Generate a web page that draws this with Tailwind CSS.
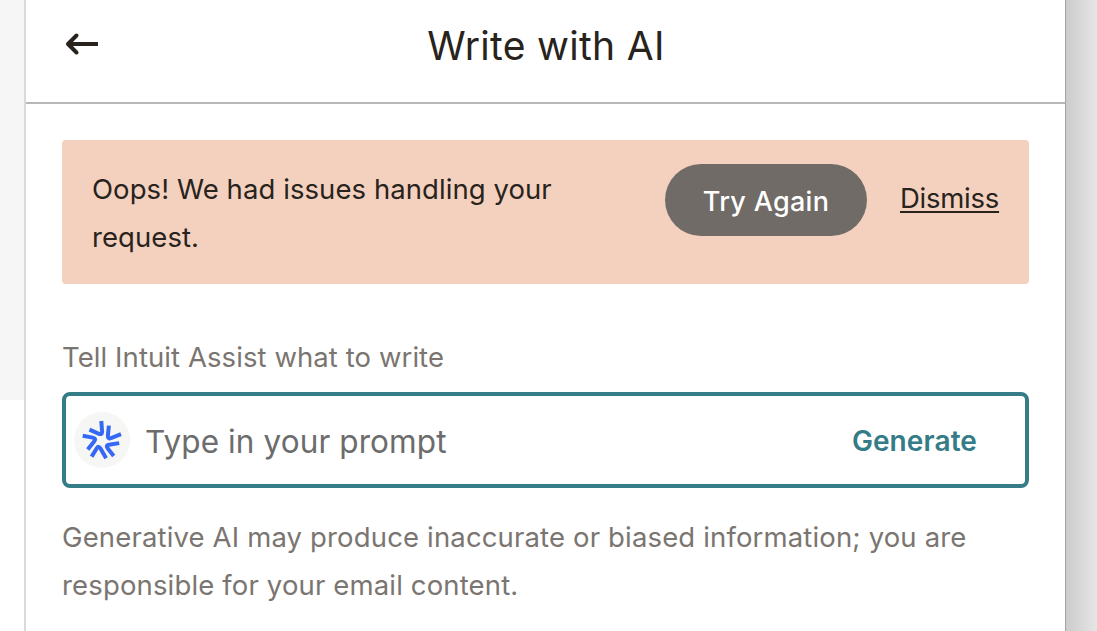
<!DOCTYPE html>
<html lang="en"><head><meta charset="utf-8"><title>Write with AI</title>
<script src="https://cdn.jsdelivr.net/npm/@tailwindcss/browser@4"></script></head>
<body class="h-[631px] w-[1097px] overflow-hidden bg-white font-['Inter',sans-serif] font-normal text-[#28231c]">
<div class="flex h-full">
<aside class="h-[400px] w-6 shrink-0 bg-[#f6f6f6]"></aside>
<main class="flex h-full w-[1041px] shrink-0 flex-col border-l-2 border-[#dadada] bg-white">
<header class="grid h-[104px] shrink-0 grid-cols-[1fr_auto_1fr] border-b-2 border-[#b8b8b8] pl-[38px] pr-[37px] pt-5">
<button class="mt-[12px] h-6 w-9" aria-label="Back"><svg class="h-6 w-9" viewBox="0 0 36 24" fill="none" stroke="currentColor" stroke-width="4"><path d="M4 12H34"/><path d="M12.5 3.5L4 12L12.5 20.5" stroke-linecap="round" stroke-linejoin="round"/></svg></button>
<h1 class="h-[52px] text-[39px] leading-[52px] tracking-[0.3px]">Write with AI</h1>
</header>
<section class="mt-9 ml-9 flex h-36 w-[967px] shrink-0 rounded-[4px] bg-[#f4d1bf]">
<p class="ml-[30px] w-[500px] shrink-0 pt-[25px] text-[27.5px] leading-[48px] tracking-[0.07px]">Oops! We had issues handling your<br>request.</p>
<button class="ml-[73px] mt-6 h-[72px] w-[202px] shrink-0 rounded-full bg-[#706b67] pt-[4px] text-[27px] font-medium tracking-[0.3px] text-white">Try Again</button>
<a class="ml-[33px] mt-[34px] text-[27.5px] leading-[48px] tracking-[-0.25px] underline decoration-2 underline-offset-[3px]">Dismiss</a>
</section>
<section class="ml-9 mt-[49px] w-[967px] text-[27.5px] leading-[48px] text-[#7a7570]">
<label class="block tracking-[0.08px]">Tell Intuit Assist what to write</label>
<div class="mt-[11px] flex h-24 items-center rounded-[8px] border-4 border-[#357c87] pl-2 pr-[48px]">
<svg class="h-14 w-14 shrink-0" viewBox="74 412 56 56" fill="none" stroke="#3569f5" stroke-width="4"><circle cx="102" cy="440" r="28" fill="#f6f6f5" stroke="none"/>
<path d="M101.3 421L102.1 431.5Q102.2 435 99 433.8L89.5 429.7"/>
<path d="M108.9 425.6L107.9 435.5Q107.7 439.3 111 438.2L121 434.2"/>
<path d="M119.2 443.1L109 444.8Q105.4 445.4 107.6 448.2L113.7 456"/>
<path d="M106.1 458.2L100.5 448.6Q98.6 445.3 96.8 448.3L91.6 456.6"/>
<path d="M82.7 435.8L92.8 437.6Q96.6 438.4 94.3 441.3L87.7 449.5"/></svg>
<span class="ml-[15px] mt-1 text-[31.5px] tracking-[0.1px] text-[#6c6c6c]">Type in your prompt</span>
<button class="ml-auto mt-[2px] text-[28px] font-semibold tracking-[0.1px] text-[#357c87]">Generate</button></div>
<p class="mt-[25px] tracking-[0.15px]">Generative AI may produce inaccurate or biased information; you are<br>responsible for your email content.</p>
</section>
</main>
<div class="h-full w-8 shrink-0 border-l border-[#a4a4a4] bg-gradient-to-r from-[#cccccc] to-[#e6e6e6]"></div>
</div>
</body></html>
